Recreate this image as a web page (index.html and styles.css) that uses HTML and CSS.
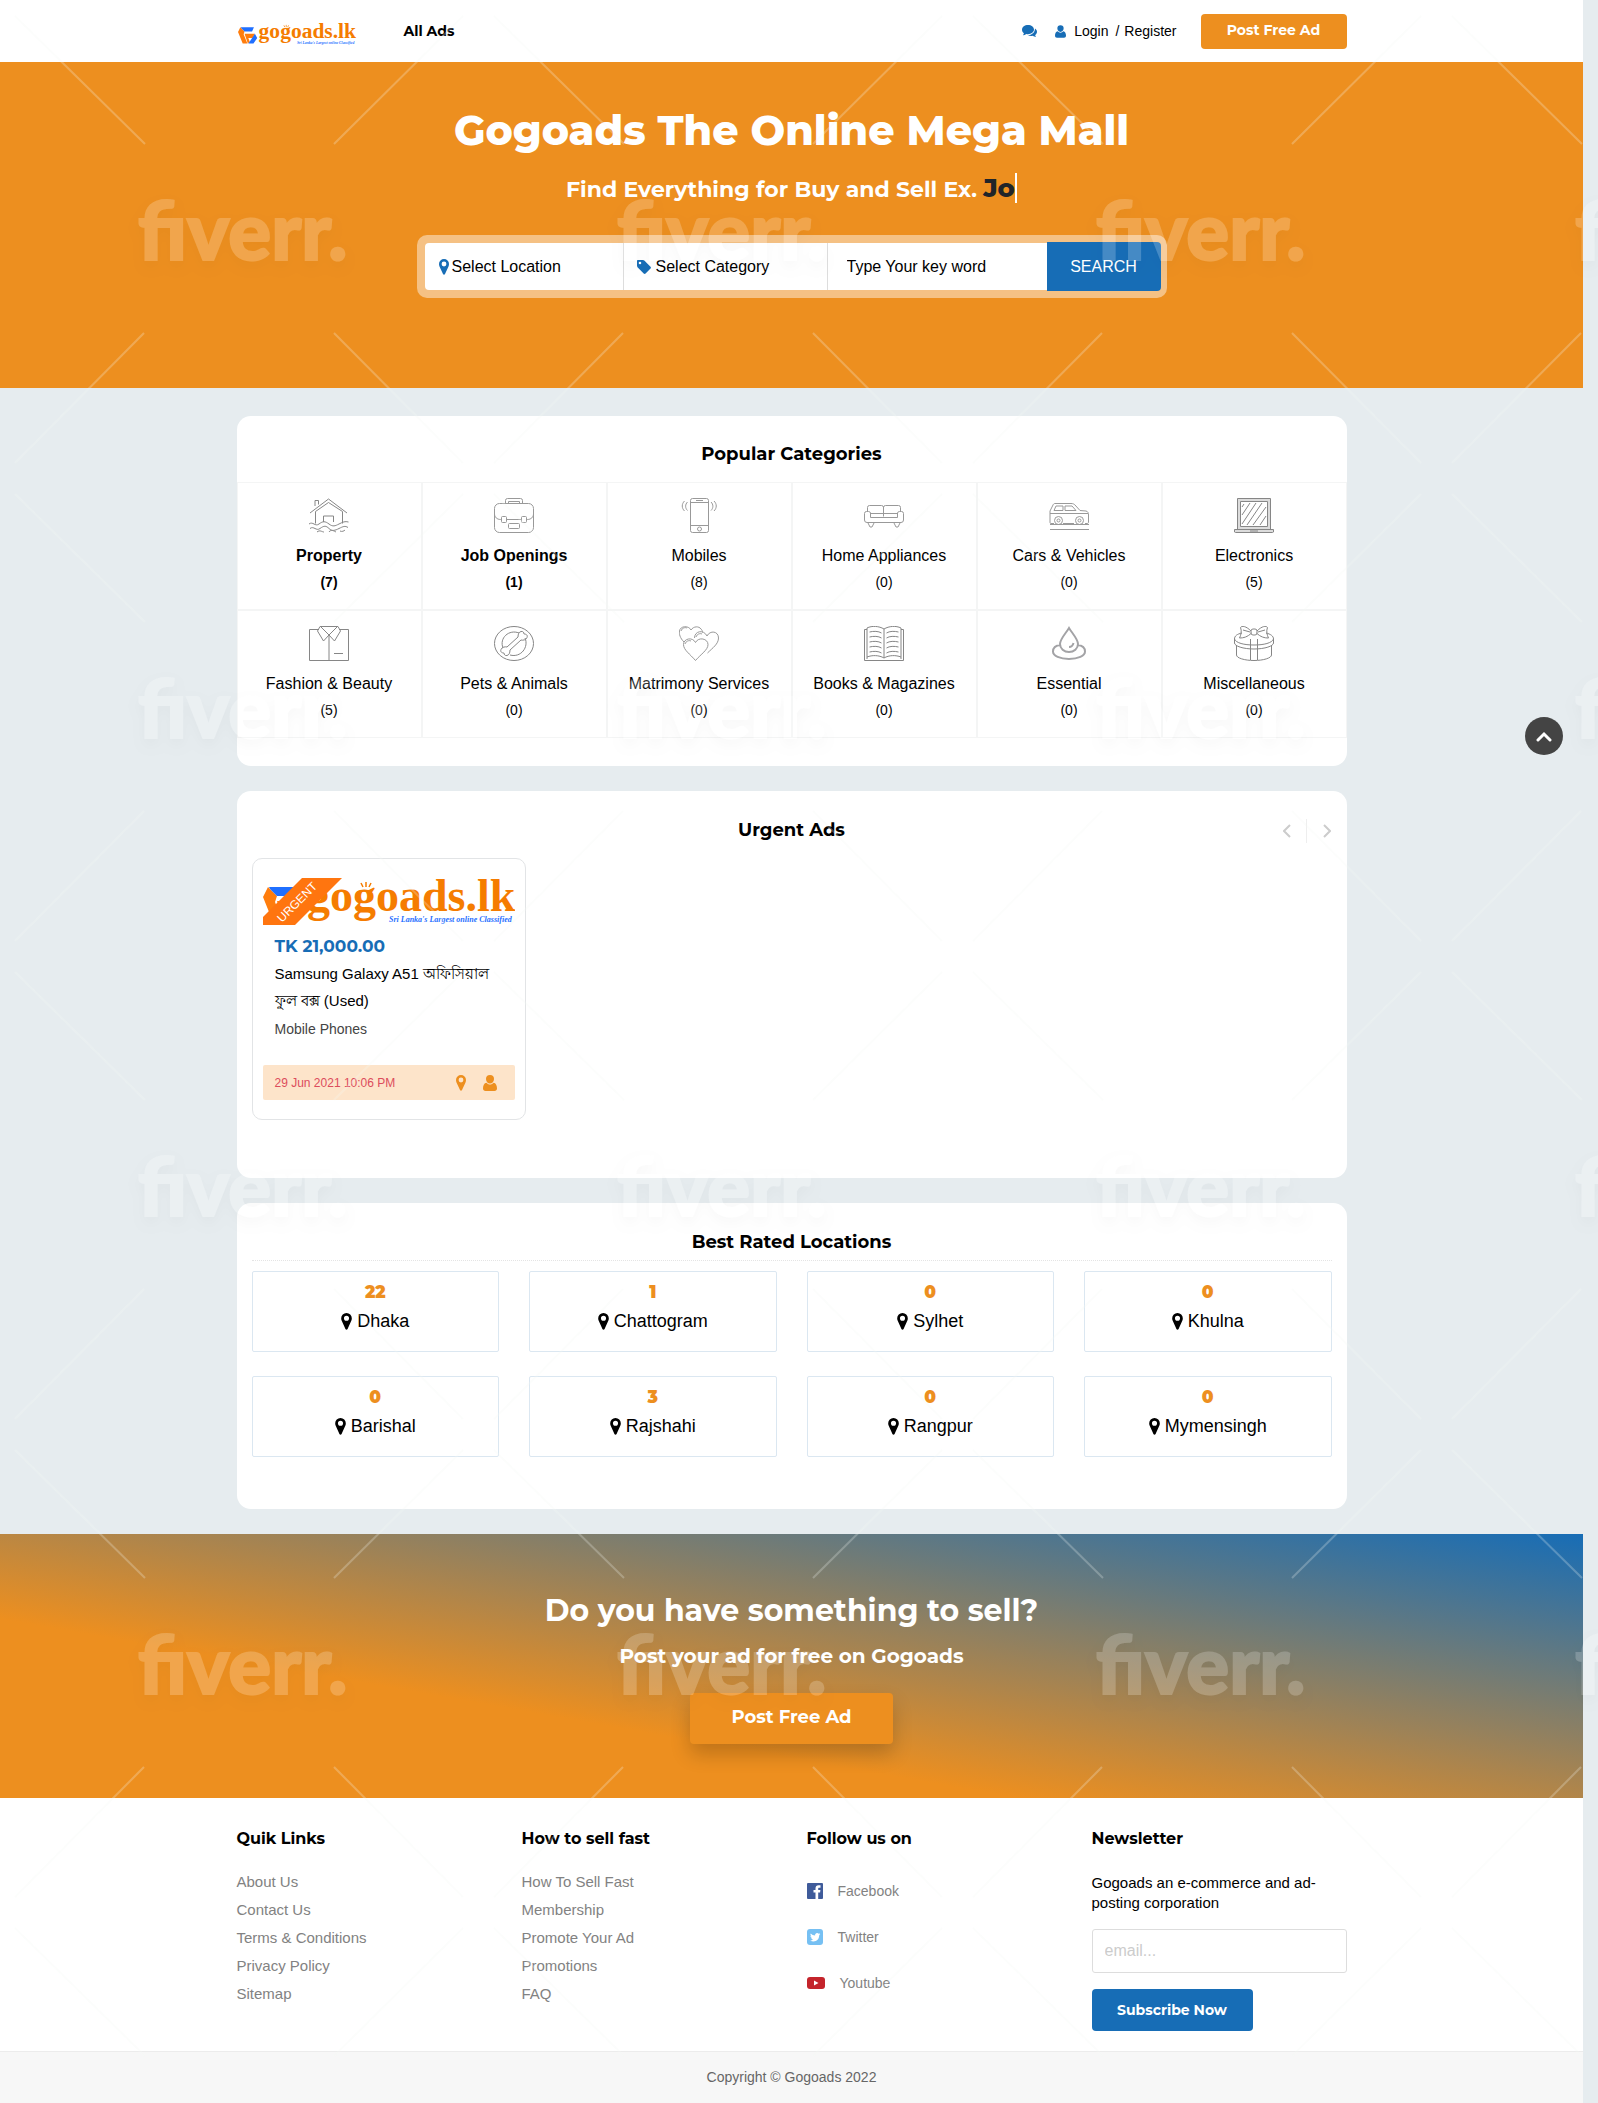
FILE: index.html
```html
<!DOCTYPE html>
<html lang="en">
<head>
<meta charset="utf-8">
<meta name="viewport" content="width=device-width, initial-scale=1">
<title>Gogoads The Online Mega Mall</title>
<link rel="stylesheet" href="styles.css">
</head>
<body>
<svg class="defs" width="0" height="0" aria-hidden="true">
  <defs>
    <symbol id="logo" viewBox="0 0 252 47">
      <path fill="#ff7d0d" d="M5 9 0 19l10 25h10l-8-20 2-6zM14 23h22l-5 9h-9l3 8-4 4z"/>
      <path fill="#1f6fff" d="M6 9h28l-4 9H14l-7-7zM36 23l5 9-8 12H22l6-9z"/>
      <text x="44" y="33" font-family="Liberation Serif, serif" font-weight="700" font-size="46" fill="#f57c00">gogoads.lk</text>
      <path stroke="#f57c00" stroke-width="1.5" d="M103 4v5M98 5l2 4M108 5l-2 4"/>
      <text x="126" y="44" font-family="Liberation Serif, serif" font-style="italic" font-weight="700" font-size="8" fill="#1f6fff">Sri Lanka's Largest online Classified</text>
    </symbol>
    <symbol id="pin" viewBox="0 0 10 16"><path fill="currentColor" fill-rule="evenodd" d="M5 0a5 5 0 0 0-5 5c0 1 .2 1.700.5 2.400L4 15c.4.900 1.600.900 2 0l3.500-7.600C9.800 6.700 10 6 10 5a5 5 0 0 0-5-5zm0 2.600a2.400 2.400 0 1 1 0 4.800 2.400 2.400 0 0 1 0-4.800z"/></symbol>
    <symbol id="user" viewBox="0 0 14 16"><path fill="currentColor" d="M7 0a4 4 0 0 1 4 4c0 2.500-1.700 4.500-4 4.500S3 6.500 3 4a4 4 0 0 1 4-4zM3.500 7.700C4.400 8.700 5.600 9.500 7 9.500s2.600-.8 3.500-1.800C13 8 14 10.500 14 13.500c0 1.500-1 2.500-2.500 2.500h-9C1 16 0 15 0 13.500c0-3 1-5.500 3.500-5.800z"/></symbol>
  </defs>
</svg>

<header class="top">
  <div class="wrap top-row">
    <a class="brand" href="#" aria-label="Gogoads home"><svg width="120" height="22"><use href="#logo"/></svg></a>
    <nav><a class="all-ads" href="#">All Ads</a></nav>
    <div class="account">
      <a class="chat" href="#" aria-label="Messages"><svg width="15" height="13" viewBox="0 0 15 13"><path fill="currentColor" d="M6 0c3.300 0 6 2 6 4.600S9.300 9.200 6 9.200c-.6 0-1.200-.1-1.700-.2-1 .8-2.200 1.200-3.400 1.200.5-.5.900-1.200 1-1.900C.7 7.500 0 6.200 0 4.600 0 2 2.700 0 6 0z"/><path fill="currentColor" d="M13 3.500c1.200.800 2 1.900 2 3.200 0 1.400-.7 2.500-1.900 3.300.1.800.5 1.500 1 2-1.200 0-2.400-.5-3.300-1.200-1.900.4-3.500.1-4.900-.7 4 0 7-2.500 7.100-6.600z"/></svg></a>
      <svg class="who" width="11" height="13"><use href="#user"/></svg>
      <a href="#">Login</a><span class="slash">/</span><a href="#">Register</a>
      <a class="btn btn-top" href="#">Post Free Ad</a>
    </div>
  </div>
</header>

<main>
  <section class="hero">
    <h1>Gogoads The Online Mega Mall</h1>
    <p class="tagline">Find Everything for Buy and Sell Ex. <span class="typed">Jo</span></p>
    <form class="search">
      <button type="button" class="pick pick-loc"><svg width="10" height="16"><use href="#pin"/></svg>Select Location</button>
      <button type="button" class="pick pick-cat"><svg width="14" height="14" viewBox="0 0 14 14"><path fill="currentColor" fill-rule="evenodd" d="M1 0h5l1.300.5 6.200 6.200c.6.600.6 1.300 0 1.900l-4.900 4.900c-.6.600-1.300.600-1.900 0L.5 7.300 0 6V1c0-.6.400-1 1-1zm2 1.700a1.300 1.300 0 1 0 0 2.600 1.300 1.300 0 0 0 0-2.600z"/></svg>Select Category</button>
      <input class="keyword" type="text" aria-label="Key word" placeholder="Type Your key word">
      <button class="go" type="submit">SEARCH</button>
    </form>
  </section>

  <section class="wrap card categories">
    <h2>Popular Categories</h2>
    <div class="cat-grid">
      <a class="cat strong" href="#">
        <svg class="ico dark" viewBox="0 0 40 35"><path d="M1 15 19.500 1 38 15M6.500 13.500 19.500 4.500 33.500 13.500M6.500 13.500v12M33.500 13.500v12M6 8V2.500h3.500v4M14.500 24v-6h10v6M0 26c4-3 6 3 10 0s6-3 10 0 6 2 10 0 6-3 9.500-2M1 30.500c4-3 6 3 10 0s6-3 9 0 6 2 10 0 6-3 9-1M8 34c3-2.500 5 0 7 0M20 34c2-3 5-1 7 0M31 33c2 1 4 0 5-1"/></svg>
        <span class="name">Property</span><span class="count">(7)</span></a>
      <a class="cat strong" href="#">
        <svg class="ico" viewBox="0 0 40 35"><rect x=".5" y="5.500" width="39" height="29" rx="5"/><path d="M11.500 5.500V2.500a2 2 0 0 1 2-2h13a2 2 0 0 1 2 2v3M14.500 5.500v-2h11v2M.5 16c0 3 2.500 5.500 6 5.500h1M12.500 21.500h15M39.500 16c0 3-2.500 5.500-6 5.500h-1"/><rect x="7.500" y="18.500" width="5" height="6" rx="1"/><rect x="27.500" y="18.500" width="5" height="6" rx="1"/><rect x="14.500" y="25.500" width="11" height="5" rx="1"/></svg>
        <span class="name">Job Openings</span><span class="count">(1)</span></a>
      <a class="cat" href="#">
        <svg class="ico" viewBox="0 0 40 35"><rect x="11.500" y=".5" width="18" height="34" rx="2"/><path d="M11.500 4.500h18M11.500 27.500h18M17 2.500h7M8.500 4c-2.500 2.500-2.500 6 0 8.500M5.500 3c-3 3-3 7 0 10M32 4c2.500 2.500 2.500 6 0 8.500M35 3c3 3 3 7 0 10"/><circle cx="20.500" cy="31" r="2"/></svg>
        <span class="name">Mobiles</span><span class="count">(8)</span></a>
      <a class="cat" href="#">
        <svg class="ico" viewBox="0 0 40 35"><path d="M3.500 13V9.500a2 2 0 0 1 2-2h12a2 2 0 0 1 2 2 2 2 0 0 1 2-2h13a2 2 0 0 1 2 2V13M19.500 9v9.500M6.500 19.500V15a2 2 0 0 0-2-1.500h-2a2 2 0 0 0-2 2V22a2.500 2.500 0 0 0 2.500 2.500h34a2.500 2.500 0 0 0 2.500-2.500v-6.500a2 2 0 0 0-2-2h-2a2 2 0 0 0-2 1.500v4.500zM6.500 15.500h27M4 25l2 4h2l2-4M30 25l2 4h2l2-4"/></svg>
        <span class="name">Home Appliances</span><span class="count">(0)</span></a>
      <a class="cat" href="#">
        <svg class="ico" viewBox="0 0 40 35"><path d="M5 25.500H2a1 1 0 0 1-1-1V13l3-6c.5-1 1-1.500 2-1.500h16c2 0 3 .5 4 1.500l5 5.500 6 .5c2 .5 2.500 2 2.500 4v7c0 1-.5 1.500-1.500 1.500h-2M14 25.500h11M5 12.500h9V8H7zM16 8v4.500h11l-4-4.500zM1 15.500h38M1 31.500h39M1 26.500h39"/><circle cx="9.500" cy="22.500" r="4"/><circle cx="9.500" cy="22.500" r="1.500"/><circle cx="30.500" cy="22.500" r="4"/><circle cx="30.500" cy="22.500" r="1.500"/></svg>
        <span class="name">Cars &amp; Vehicles</span><span class="count">(0)</span></a>
      <a class="cat" href="#">
        <svg class="ico dark" viewBox="0 0 40 35"><path fill="#dcdcdc" d="M3.500.5h33v31h-33zM.5 31.500h39V34l-1 .5h-37l-1-.5z"/><path fill="#fff" d="M6.500 3.500h27v25h-27z"/><path d="M8 17l8-12M8 26 22 5M13 27 28 5M19 27 32 9M26 27l6-9M8 9l2-3M16 33h8"/></svg>
        <span class="name">Electronics</span><span class="count">(5)</span></a>
      <a class="cat" href="#">
        <svg class="ico dark" viewBox="0 0 40 35"><path d="M10 3.500H.5v31h39v-31H30M20 9v25.500M11 .5h18M11 .5 8.500 5l6 10L20 9M29 .5 31.500 5l-6 10L20 9M12 1l8 8 8-8M25 27.500h9"/></svg>
        <span class="name">Fashion &amp; Beauty</span><span class="count">(5)</span></a>
      <a class="cat" href="#">
        <svg class="ico dark" viewBox="0 0 40 35"><ellipse cx="20" cy="17.500" rx="19.500" ry="17"/><path d="M9 22C5 12 15 3 25 7M31 12c4 9-4 20-15 17"/><path d="M24 11c0-3 1-5 3-5.500s3 1 3 2.500c2 0 4 1 3 3.500s-4 3-6 2.500L16 24c0 3-1 5-3 5.500s-3-1-3-2.500c-2 0-4-1-3-3.500s4-3 6-2.500z"/></svg>
        <span class="name">Pets &amp; Animals</span><span class="count">(0)</span></a>
      <a class="cat" href="#">
        <svg class="ico" viewBox="0 0 40 35"><path d="M5 16C1 12 0 8 .5 5c.5-5 9-6 11.500-1 2.500-4 8-4 10-1 1 1 1.500 2 1.500 3.500M2 5c1-3 4-4 6-3"/><path d="M15.500 12c0-7 9-9 12.500-2 3-6 11.500-5 11.500 2 0 6-6 10-11 15M17 11c1-3 4-4 6-3"/><path fill="#fff" d="M16.500 34.500C11 28 4.500 24 4.500 18.500c0-6 9-8 12-2 3-6 12.500-4 12.500 2 0 5.500-7 9.500-12.500 16zM6 18c1-3 4-4 6-3"/></svg>
        <span class="name">Matrimony Services</span><span class="count">(0)</span></a>
      <a class="cat" href="#">
        <svg class="ico dark" viewBox="0 0 40 35"><path d="M3 3.500H.5v31h39v-31H37M3 33V2C8-.5 15 0 20 3c5-3 12-3.500 17-1v31M20 3v29M3 31c5-2 12-2 17 1 5-3 12-3 17-1"/><path d="M5.500 6c4-1 9-1 12 1M5.500 11c4-1 9-1 12 1M5.500 16c4-1 9-1 12 1M5.500 21c4-1 9-1 12 1M5.500 26c4-1 9-1 12 1M22.500 7c3-2 8-2 12-1M22.500 12c3-2 8-2 12-1M22.500 17c3-2 8-2 12-1M22.500 22c3-2 8-2 12-1M22.500 27c3-2 8-2 12-1"/></svg>
        <span class="name">Books &amp; Magazines</span><span class="count">(0)</span></a>
      <a class="cat" href="#">
        <svg class="ico bold" viewBox="0 0 40 35"><path d="M20 2c3 5 9 11 9 16a9 8 0 0 1-18 0c0-5 6-11 9-16zM11.500 19C7 19.500 4 22 4 25.500 4 30 11 33 20 33s16-3 16-7.500c0-3.500-3-6-7.500-6.500M20 21c3 0 4-2 4.500-4"/></svg>
        <span class="name">Essential</span><span class="count">(0)</span></a>
      <a class="cat" href="#">
        <svg class="ico dark" viewBox="0 0 40 35"><path d="M8 7C3 8 .5 10 .5 13v4C.5 20 9 23 20 23s19.500-3 19.500-6v-4c0-3-3-5-7.500-6M.5 13C2 17 10 19 20 19s18-2 19.500-6M2.500 20v9c0 3 8 5.500 17.500 5.500S37.500 32 37.500 29v-9M16.500 13v21M23.500 13v21M17 5C12 0 8-.5 6.500 1.500 8 5 7 9 5.500 12c4 0 8-1 12-5M23 5c5-5 9-5.500 10.500-3.500C32 5 33 9 34.500 12c-4 0-8-1-12-5M9 4l7 2M31 4l-7 2"/><rect x="17" y="3" width="6" height="6" rx="2"/></svg>
        <span class="name">Miscellaneous</span><span class="count">(0)</span></a>
    </div>
  </section>

  <section class="wrap card urgent">
    <div class="urgent-head">
      <h2>Urgent Ads</h2>
      <div class="arrows">
        <button type="button" aria-label="Previous"><svg width="8" height="14" viewBox="0 0 8 14"><path d="M7 1 1 7l6 6"/></svg></button>
        <button type="button" aria-label="Next"><svg width="8" height="14" viewBox="0 0 8 14"><path d="m1 1 6 6-6 6"/></svg></button>
      </div>
    </div>
    <article class="ad">
      <svg class="ad-pic" viewBox="0 0 252 47" role="img" aria-label="Gogoads.lk">
        <use href="#logo" width="252" height="47"/>
        <path fill="#ff750f" d="M39 0h40L32 47H0v-8z"/>
        <text class="ribbon" transform="translate(19 45) rotate(-45)">URGENT</text>
      </svg>
      <div class="ad-body">
        <p class="price">TK 21,000.00</p>
        <h3><a href="#">Samsung Galaxy A51 অফিসিয়াল ফুল বক্স (Used)</a></h3>
        <p class="ad-cat">Mobile Phones</p>
      </div>
      <footer class="ad-foot">
        <time datetime="2021-06-29T22:06">29 Jun 2021 10:06 PM</time>
        <svg width="10" height="16"><use href="#pin"/></svg>
        <svg width="14" height="16"><use href="#user"/></svg>
      </footer>
    </article>
  </section>

  <section class="wrap card locations">
    <h2>Best Rated Locations</h2>
    <div class="loc-grid">
      <a class="loc" href="#"><b>22</b><span><svg width="11" height="17"><use href="#pin"/></svg>Dhaka</span></a>
      <a class="loc" href="#"><b>1</b><span><svg width="11" height="17"><use href="#pin"/></svg>Chattogram</span></a>
      <a class="loc" href="#"><b>0</b><span><svg width="11" height="17"><use href="#pin"/></svg>Sylhet</span></a>
      <a class="loc" href="#"><b>0</b><span><svg width="11" height="17"><use href="#pin"/></svg>Khulna</span></a>
      <a class="loc" href="#"><b>0</b><span><svg width="11" height="17"><use href="#pin"/></svg>Barishal</span></a>
      <a class="loc" href="#"><b>3</b><span><svg width="11" height="17"><use href="#pin"/></svg>Rajshahi</span></a>
      <a class="loc" href="#"><b>0</b><span><svg width="11" height="17"><use href="#pin"/></svg>Rangpur</span></a>
      <a class="loc" href="#"><b>0</b><span><svg width="11" height="17"><use href="#pin"/></svg>Mymensingh</span></a>
    </div>
  </section>

  <section class="sell">
    <h2>Do you have something to sell?</h2>
    <p>Post your ad for free on Gogoads</p>
    <a class="btn btn-sell" href="#">Post Free Ad</a>
  </section>
</main>

<footer class="bottom">
  <div class="wrap cols">
    <section>
      <h4>Quik Links</h4>
      <ul class="links">
        <li><a href="#">About Us</a></li>
        <li><a href="#">Contact Us</a></li>
        <li><a href="#">Terms &amp; Conditions</a></li>
        <li><a href="#">Privacy Policy</a></li>
        <li><a href="#">Sitemap</a></li>
      </ul>
    </section>
    <section>
      <h4>How to sell fast</h4>
      <ul class="links">
        <li><a href="#">How To Sell Fast</a></li>
        <li><a href="#">Membership</a></li>
        <li><a href="#">Promote Your Ad</a></li>
        <li><a href="#">Promotions</a></li>
        <li><a href="#">FAQ</a></li>
      </ul>
    </section>
    <section>
      <h4>Follow us on</h4>
      <ul class="social">
        <li><a href="#"><svg width="16" height="16" viewBox="0 0 16 16"><rect width="16" height="16" rx="1" fill="#3f5b9a"/><path fill="#fff" d="M8.500 16V9.500h-2V7h2V5.500C8.500 3.500 9.700 2.300 11.600 2.300h1.900v2.400h-1.300c-.8 0-1 .4-1 1V7h2.200l-.3 2.500h-1.900V16z"/></svg>Facebook</a></li>
        <li><a href="#"><svg width="16" height="16" viewBox="0 0 16 16"><rect width="16" height="16" rx="3" fill="#76c0f3"/><path fill="#fff" d="M13.300 5c-.4.200-.8.300-1.200.4.400-.3.700-.7.900-1.200-.4.200-.9.400-1.300.5a2.100 2.100 0 0 0-3.600 1.900A6 6 0 0 1 3.700 4.400a2.100 2.100 0 0 0 .7 2.800c-.4 0-.7-.1-1-.3 0 1 .7 1.900 1.700 2.100-.3.100-.6.100-.9 0 .3.900 1.100 1.500 2 1.500-.9.700-1.900 1-3.100.9 4.200 2.600 9.200 0 9.100-5.200.4-.3.800-.7 1.100-1.200z"/></svg>Twitter</a></li>
        <li><a href="#"><svg width="18" height="12" viewBox="0 0 18 12"><rect width="18" height="12" rx="3" fill="#c4242b"/><path fill="#fff" d="M7 3.500v5L11.500 6z"/></svg>Youtube</a></li>
      </ul>
    </section>
    <section>
      <h4>Newsletter</h4>
      <form class="news">
        <label for="email">Gogoads an e-commerce and ad-posting corporation</label>
        <input id="email" type="email" placeholder="email...">
        <button type="submit">Subscribe Now</button>
      </form>
    </section>
  </div>
  <p class="copy">Copyright © Gogoads 2022</p>
</footer>

<button class="to-top" type="button" aria-label="Back to top"><svg width="16" height="11" viewBox="0 0 16 11"><path d="m2 9 6-6 6 6"/></svg></button>

<svg class="watermark" aria-hidden="true">
  <defs>
    <pattern id="mark" width="479" height="478" patternUnits="userSpaceOnUse">
      <path d="M15 16 145 144M463 16 334 144M144 333 15 463M334 333 463 463"/>
      <text x="138" y="260">fiverr.</text>
    </pattern>
  </defs>
  <rect width="100%" height="100%" fill="url(#mark)"/>
</svg>
</body>
</html>
```
FILE: styles.css
```css
* { box-sizing: border-box; }

body {
  position: relative;
  margin: 0;
  padding-right: 15px;
  background: #e6ecef;
  color: #000;
  font: 14px/20px "Liberation Sans", Arial, sans-serif;
}

h1, h2, h3, h4, p, ul { margin: 0; padding: 0; }
ul { list-style: none; }
a { color: inherit; text-decoration: none; }
button, input { font: inherit; border: 0; padding: 0; margin: 0; }
svg { display: block; flex: none; }
.defs { position: absolute; }

h1, h2, h4, .tagline, .all-ads, .btn, .price, .loc b, .sell p, .news button {
  font-family: Montserrat, Inter, sans-serif;
  font-weight: 700;
}

.wrap { width: min(1110px, 100% - 30px); margin-inline: auto; }

/* header */
.top { background: #fff; }
.top-row { display: flex; align-items: center; height: 62px; }
.brand { padding-top: 6px; }
.all-ads { margin-left: 47px; }
.account { display: flex; align-items: center; margin-left: auto; }
.chat { color: #176db6; }
.who { color: #176db6; margin: 0 8px 0 18px; }
.slash { margin: 0 5px 0 7px; }
.btn { background: #ed8f1f; color: #fff; border-radius: 4px; text-align: center; }
.btn-top { width: 146px; margin-left: 24px; padding-bottom: 2px; line-height: 33px; }

/* hero */
.hero {
  display: flex;
  flex-direction: column;
  align-items: center;
  padding: 43px 15px 90px;
  background: #ed8f1f;
  color: #fff;
  text-align: center;
}
.hero h1 { font-size: 41px; line-height: 50px; font-weight: 800; }
.tagline { margin-top: 17px; font-size: 22px; line-height: 36px; }
.typed {
  display: inline-block;
  color: #212529;
  font-size: 26px;
  line-height: 30px;
  font-weight: 800;
  border-right: 2px solid #fff;
}
.search {
  display: grid;
  grid-template-columns: 199fr 204fr 219fr 114fr;
  align-items: center;
  width: min(750px, 100%);
  margin-top: 27px;
  padding: 7px 6px 7px 8px;
  background: rgba(255, 255, 255, .45);
  border-radius: 10px;
  font-size: 16px;
}
.pick, .keyword { height: 47px; background: #fff; color: #000; text-align: left; min-width: 0; }
.pick { display: flex; align-items: center; border-right: 1px solid #ddd; }
.pick svg { color: #176db6; }
.pick-loc { gap: 3px; padding-left: 14px; border-radius: 4px 0 0 4px; }
.pick-cat { gap: 5px; padding-left: 13px; }
.keyword { padding-left: 19px; }
.keyword::placeholder { color: #000; opacity: 1; }
.go { height: 49px; background: #176db6; color: #fff; border-radius: 0 4px 4px 0; }

/* cards */
.card { background: #fff; border-radius: 14px; margin-top: 25px; }
.card h2 { font-size: 18px; line-height: 24px; text-align: center; }

.categories { margin-top: 28px; padding: 26px 0 28px; }
.cat-grid { display: grid; grid-template-columns: repeat(6, 1fr); margin-top: 16px; }
.cat {
  display: flex;
  flex-direction: column;
  align-items: center;
  padding: 15px 0 13px;
  border: 1px solid #f4f5f5;
}
.ico { width: 40px; height: 35px; fill: none; stroke: #999; stroke-width: 1; }
.ico.dark { stroke: #868686; }
.ico.bold { stroke: #a3a3a6; stroke-width: 2; }
.name { margin-top: 10px; font-size: 16px; line-height: 26px; }
.count { line-height: 27px; }
.strong { font-weight: 700; }

.urgent { padding: 27px 15px 58px; }
.urgent-head { position: relative; }
.arrows {
  position: absolute;
  top: 1px;
  right: 1px;
  display: flex;
  align-items: center;
}
.arrows button { height: 24px; background: none; }
.arrows button:first-child { padding-right: 15px; }
.arrows button:last-child { padding-left: 16px; border-left: 1px solid #eee; }
.arrows path { fill: none; stroke: #ccc; stroke-width: 2; }
.ad {
  width: 274px;
  margin-top: 16px;
  padding: 19px 10px;
  border: 1px solid #e2e4e6;
  border-radius: 10px;
}
.ad-pic { width: 100%; height: 47px; }
.ribbon { font-size: 12px; fill: #fff; }
.ad-body { padding: 9px 12px 0; }
.price { color: #176db6; font-size: 17px; line-height: 24px; }
.ad h3 { margin-top: 2px; font-size: 15px; line-height: 27px; font-weight: 400; }
.ad-cat { margin-top: 3px; line-height: 24px; color: #444; }
.ad-foot {
  display: flex;
  align-items: center;
  height: 35px;
  margin-top: 24px;
  padding: 0 18px 0 12px;
  gap: 17px;
  background: #fde4ca;
  border-radius: 2px;
  color: #ed8f1f;
}
.ad-foot time { margin-right: auto; color: #dc4c5c; font-size: 12px; }

.locations { padding: 27px 15px 52px; }
.locations h2 { padding-bottom: 6px; border-bottom: 1px dotted #e4e4e4; }
.loc-grid {
  display: grid;
  grid-template-columns: repeat(4, 1fr);
  gap: 24px 30px;
  margin-top: 10px;
}
.loc {
  display: flex;
  flex-direction: column;
  align-items: center;
  gap: 4px;
  padding: 8px 0 17px;
  border: 1px solid #dbe7f1;
  border-radius: 2px;
  font-size: 18px;
  line-height: 26px;
}
.loc b { color: #ed8f1f; font-size: 17px; line-height: 24px; font-weight: 900; }
.loc span { display: flex; align-items: center; gap: 5px; }

/* call to action */
.sell {
  display: flex;
  flex-direction: column;
  align-items: center;
  margin-top: 25px;
  padding: 57px 15px 54px;
  background: linear-gradient(10deg, #ed8f1f 33%, #176db6 100%);
  color: #fff;
}
.sell h2 { font-size: 30px; line-height: 40px; }
.sell p { margin-top: 11px; font-size: 20px; line-height: 28px; }
.btn-sell {
  width: 203px;
  margin-top: 23px;
  padding-bottom: 3px;
  font-size: 18px;
  line-height: 48px;
  box-shadow: 0 10px 20px rgba(0, 0, 0, .2);
}

/* footer */
.bottom { background: #fff; }
.cols {
  display: grid;
  grid-template-columns: repeat(4, 1fr);
  gap: 30px;
  padding: 29px 0 20px;
}
.cols h4 { font-size: 16px; line-height: 24px; }
.links { margin-top: 17px; color: #828282; font-size: 15px; line-height: 28px; }
.social { margin-top: 17px; color: #828282; line-height: 46px; }
.social a { display: flex; align-items: center; gap: 15px; }
.news { margin-top: 22px; }
.news label { display: block; font-size: 15px; }
.news input {
  display: block;
  width: 100%;
  height: 44px;
  margin-top: 16px;
  padding: 0 12px;
  border: 1px solid #ddd;
  border-radius: 3px;
  font-size: 16px;
}
.news input::placeholder { color: #ccc; opacity: 1; }
.news button {
  width: 161px;
  height: 42px;
  margin-top: 16px;
  background: #176db6;
  color: #fff;
  border-radius: 4px;
}
.copy {
  background: #f7f7f7;
  border-top: 1px solid #ececec;
  color: #666;
  line-height: 51px;
  text-align: center;
}

/* overlays */
.to-top {
  position: absolute;
  top: 717px;
  right: 35px;
  display: grid;
  place-items: center;
  width: 38px;
  height: 38px;
  border-radius: 50%;
  background: #444;
}
.to-top path { fill: none; stroke: #fff; stroke-width: 3; stroke-linecap: round; }
.watermark {
  position: absolute;
  inset: 0;
  width: 100%;
  height: 100%;
  pointer-events: none;
}
.watermark path { stroke: #f4f9f2; stroke-opacity: .25; stroke-width: 2; }
.watermark text {
  fill: #fff;
  stroke: #fff;
  stroke-width: 2;
  opacity: .2;
  font: 900 80px Lato, sans-serif;
  filter: drop-shadow(0 6px 6px rgba(0, 0, 0, .12));
}
```
